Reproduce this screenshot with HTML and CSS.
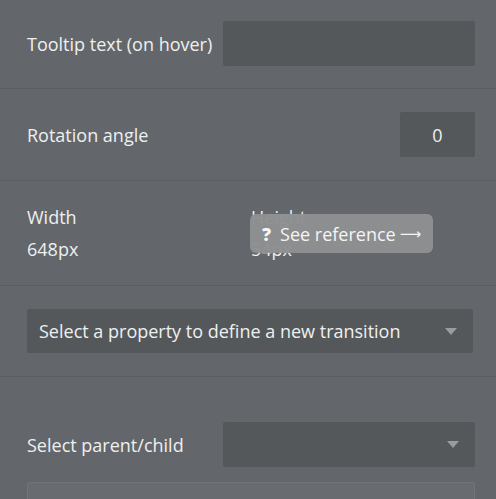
FILE: index.html
```html
<!DOCTYPE html>
<html>
<head>
<meta charset="utf-8">
<link rel="stylesheet" href="styles.css">
</head>
<body>
<div class="panel">
  <section class="sec sec-tooltip">
    <div class="row">
      <span class="label">Tooltip text (on hover)</span>
      <div class="input input-wide"></div>
    </div>
  </section>
  <section class="sec sec-rotation">
    <div class="row">
      <span class="label">Rotation angle</span>
      <div class="input input-small">0</div>
    </div>
  </section>
  <section class="sec sec-size">
    <div class="size-grid">
      <div class="size-col">
        <span class="label">Width</span>
        <span class="label">648px</span>
      </div>
      <div class="size-col">
        <span class="label">Height</span>
        <span class="label">54px</span>
      </div>
    </div>
    <div class="badge"><span class="q">?</span>See reference <span class="arrow">⟶</span></div>
  </section>
  <section class="sec sec-transition">
    <div class="select select-full">
      <span>Select a property to define a new transition</span>
      <span class="caret"></span>
    </div>
  </section>
  <section class="sec sec-parent">
    <div class="row">
      <span class="label">Select parent/child</span>
      <div class="select select-wide"><span></span><span class="caret"></span></div>
    </div>
    <div class="box"></div>
  </section>
</div>
</body>
</html>
```

FILE: styles.css
```css
html, body {
  margin: 0;
  padding: 0;
  background: #63676b;
  overflow: hidden;
}
body {
  font-family: "Open Sans", "Noto Sans", sans-serif;
  color: #eef0f0;
  font-size: 18px;
  width: 496px;
  height: 499px;
}
.sec {
  border-bottom: 1px solid #5a5e62;
  padding: 0 21px 0 27px;
  box-sizing: border-box;
  position: relative;
}
.sec-tooltip { height: 89px; padding-top: 21px; }
.sec-rotation { height: 92px; padding-top: 23px; }
.sec-size { height: 105px; padding-top: 24px; }
.sec-transition { height: 91px; padding-top: 23px; padding-right: 23px; }
.sec-parent { border-bottom: none; padding-top: 45px; height: 122px; }
.row {
  display: flex;
  align-items: center;
  justify-content: space-between;
}
.label { line-height: 24px; white-space: nowrap; }
.input {
  background: #54585b;
  height: 45px;
  border-radius: 2px;
  box-sizing: border-box;
}
.input-wide { width: 252px; }
.input-small {
  width: 75px;
  display: flex;
  align-items: center;
  justify-content: center;
}
.size-grid {
  display: grid;
  grid-template-columns: 224px 1fr;
}
.size-col {
  display: flex;
  flex-direction: column;
  gap: 8px;
}
.badge {
  position: absolute;
  left: 250px;
  top: 33px;
  width: 183px;
  height: 39px;
  box-sizing: border-box;
  background: rgba(142, 144, 145, 0.97);
  border-radius: 6px;
  display: flex;
  align-items: center;
  padding-left: 12px;
  color: #f4f5f5;
  font-size: 18px;
  white-space: nowrap;
}
.badge .q {
  font-weight: 800;
  margin-right: 9px;
  font-size: 18px;
}
.badge .arrow {
  font-family: "DejaVu Sans", sans-serif;
  font-size: 15px;
  margin-left: 4px;
}
.select {
  background: #54585b;
  height: 44px;
  border-radius: 2px;
  display: flex;
  align-items: center;
  justify-content: space-between;
  box-sizing: border-box;
  padding: 0 16px 0 12px;
}
.select-full { width: 100%; }
.select-wide { width: 252px; height: 45px; }
.caret {
  width: 0;
  height: 0;
  border-left: 6px solid transparent;
  border-right: 6px solid transparent;
  border-top: 7px solid #9a9c9e;
}
.box {
  margin-top: 15px;
  height: 16px;
  background: #686c70;
  border: 1px solid #727679;
  border-bottom: none;
  border-radius: 3px 3px 0 0;
}
```
